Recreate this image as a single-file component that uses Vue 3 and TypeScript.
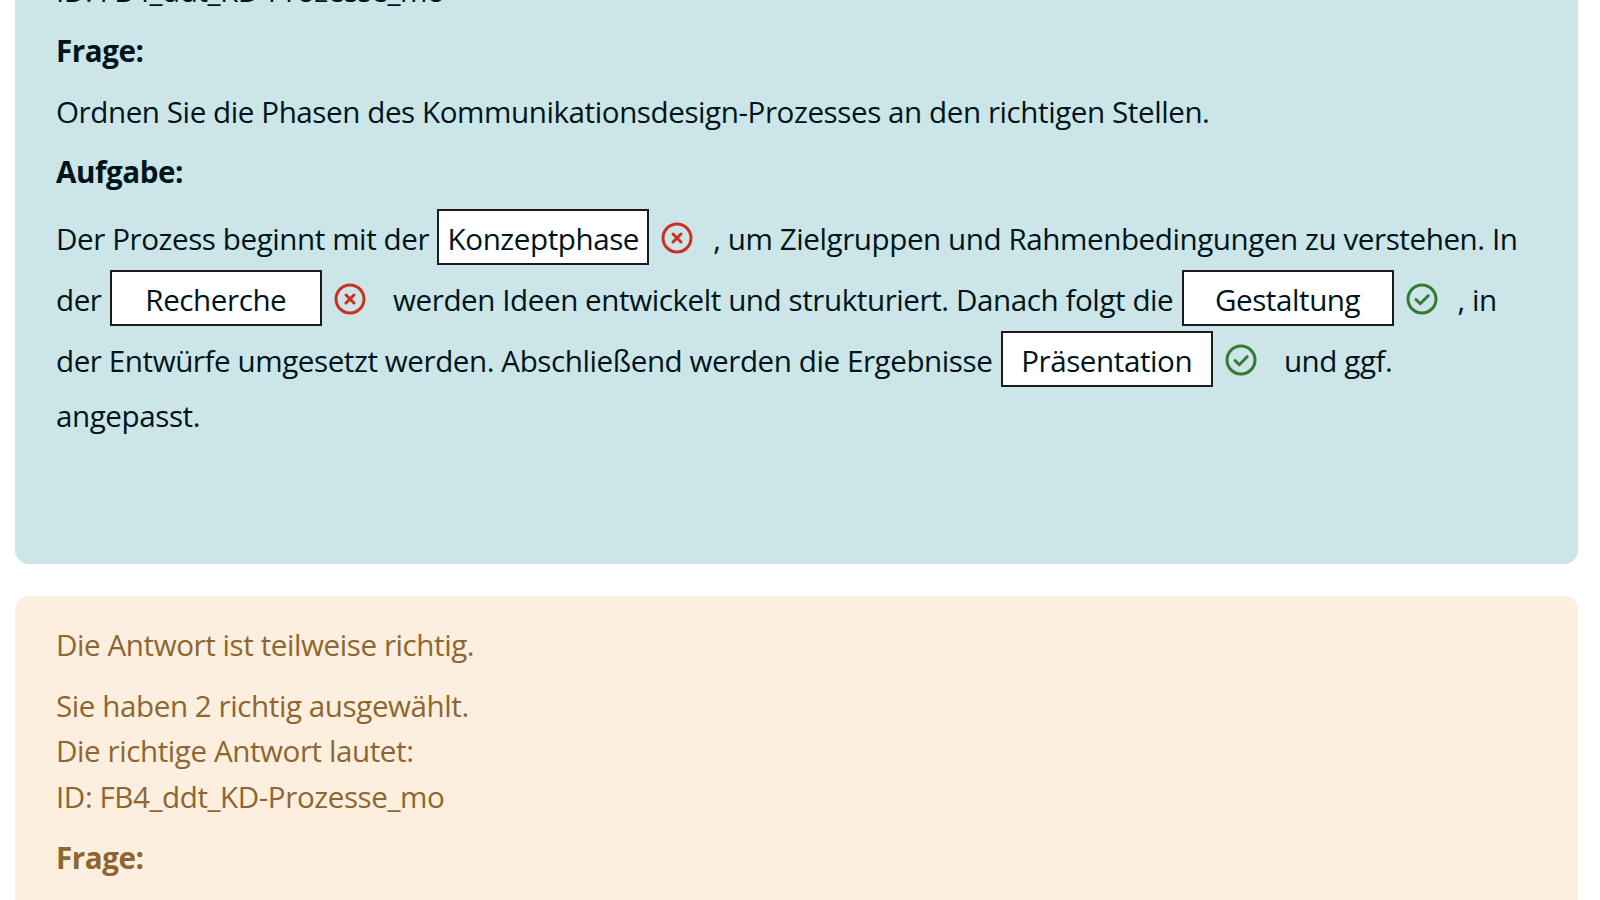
<script setup lang="ts">
interface Part { text?: string; answer?: string; ok?: boolean }
const parts: Part[] = [
  { text: 'Der Prozess beginnt mit der ' },
  { answer: 'Konzeptphase', ok: false },
  { text: ', um Zielgruppen und Rahmenbedingungen zu verstehen. In der ' },
  { answer: 'Recherche', ok: false },
  { text: ' werden Ideen entwickelt und strukturiert. Danach folgt die ' },
  { answer: 'Gestaltung', ok: true },
  { text: ', in der Entwürfe umgesetzt werden. Abschließend werden die Ergebnisse ' },
  { answer: 'Präsentation', ok: true },
  { text: ' und ggf. angepasst.' }
]
</script>

<template>
  <div class="page">
    <section class="card question">
      <p class="para">ID: FB4_ddt_KD-Prozesse_mo</p>
      <p class="para"><strong>Frage:</strong></p>
      <p class="para">Ordnen Sie die Phasen des Kommunikationsdesign-Prozesses an den richtigen Stellen.</p>
      <p class="para"><strong>Aufgabe:</strong></p>
      <p class="cloze">
        <template v-for="(p, i) in parts" :key="i">
          <template v-if="p.text">{{ p.text }}</template>
          <template v-else>
            <span class="answer">{{ p.answer }}</span>
            <svg class="mark" :class="p.ok ? 'good' : 'bad'" viewBox="0 0 32 32" aria-hidden="true">
              <circle cx="16" cy="16" r="14" fill="none" stroke="currentColor" stroke-width="3" />
              <path v-if="p.ok" d="M10 16.5l4.2 4.2 8-8" fill="none" stroke="currentColor" stroke-width="3" stroke-linecap="round" stroke-linejoin="round" />
              <path v-else d="M12 12l8 8M20 12l-8 8" fill="none" stroke="currentColor" stroke-width="3" stroke-linecap="round" />
            </svg>
          </template>
        </template>
      </p>
    </section>
    <section class="card outcome">
      <p class="para">Die Antwort ist teilweise richtig.</p>
      <p class="para">Sie haben 2 richtig ausgewählt.<br />Die richtige Antwort lautet:<br />ID: FB4_ddt_KD-Prozesse_mo</p>
      <p class="para"><strong>Frage:</strong></p>
    </section>
  </div>
</template>

<style>
html, body { margin: 0; background: #fff; overflow: hidden; }
</style>

<style scoped>
.page {
  height: 900px;
  overflow: hidden;
  padding: 0 22px 0 15px;
  box-sizing: border-box;
  font-family: "Open Sans", "Noto Sans", sans-serif;
  font-size: 29.6px;
  line-height: 45.5px;
  letter-spacing: -0.43px;
}
.card {
  border-radius: 14px;
  padding: 0 41px;
  box-sizing: border-box;
}
.question {
  background: #cbe5e8;
  color: #00141a;
  height: 596.5px;
  margin-top: -32.5px;
  margin-bottom: 32px;
}
.outcome {
  background: #fcefdf;
  color: #8e662e;
  height: 400px;
  padding-top: 26px;
}
p { margin: 0; }
.para { margin-bottom: 15px; }
.outcome .para:nth-child(2) { margin-bottom: 16px; }
.cloze { line-height: 48px; margin-top: -1px; }
.answer {
  display: inline-block;
  box-sizing: border-box;
  width: 212px;
  height: 56px;
  padding-top: 2px;
  margin-left: 1px;
  margin-bottom: 5px;
  line-height: 52px;
  border: 2px solid #1c1c1c;
  background: #fff;
  color: #00141a;
  text-align: center;
}
.mark {
  width: 32px;
  height: 32px;
  vertical-align: -4px;
  margin: 0 20px 0 12px;
}
.good { color: #357a32; }
.bad { color: #ca3120; }
</style>
